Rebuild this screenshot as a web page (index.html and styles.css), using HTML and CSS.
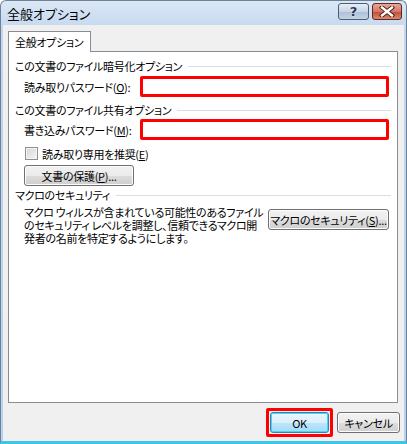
FILE: index.html
```html
<!DOCTYPE html>
<html lang="ja">
<head>
<meta charset="utf-8">
<link rel="stylesheet" href="styles.css">
</head>
<body>
<div class="window">
  <div class="titlebar">
    <span class="title">全般オプション</span>
    <div class="caption">
      <span class="cbtn help">?</span>
      <span class="cbtn close"><svg width="16" height="11" viewBox="0 0 16 11"><path d="M3 1.5 L13 9.5 M13 1.5 L3 9.5" stroke="#4a1a14" stroke-width="4.2" stroke-linecap="square" fill="none"/><path d="M3 1.5 L13 9.5 M13 1.5 L3 9.5" stroke="#ffffff" stroke-width="2.4" stroke-linecap="square" fill="none"/></svg></span>
    </div>
  </div>
  <div class="client">
    <div class="tabs"><div class="tab">全般オプション</div></div>
    <div class="panel">
      <div class="group-head"><span>この文書のファイル暗号化オプション</span><i class="rule"></i></div>
      <div class="field-row">
        <span class="label">読み取りパスワード(<u>O</u>):</span>
        <span class="input-hl"></span>
      </div>
      <div class="group-head gh2"><span>この文書のファイル共有オプション</span><i class="rule"></i></div>
      <div class="field-row fr2">
        <span class="label">書き込みパスワード(<u>M</u>):</span>
        <span class="input-hl"></span>
      </div>
      <div class="check-row"><span class="checkbox"></span><span>読み取り専用を推奨(<u>E</u>)</span></div>
      <div class="protect-row"><span class="btn protect">文書の保護(<u>P</u>)...</span></div>
      <div class="group-head gh3"><span>マクロのセキュリティ</span><i class="rule"></i></div>
      <div class="macro">
        <p class="macro-text">マクロ ウィルスが含まれている可能性のあるファイル<br>のセキュリティ レベルを調整し、信頼できるマクロ開<br>発者の名前を特定するようにします。</p>
        <span class="btn macro-btn">マクロのセキュリティ(<u>S</u>)...</span>
      </div>
    </div>
    <div class="footer">
      <span class="ok-hl"><span class="btn ok">OK</span></span>
      <span class="btn cancel">キャンセル</span>
    </div>
  </div>
</div>
</body>
</html>
```

FILE: styles.css
```css
html, body {
  margin: 0;
  padding: 0;
  background: #ffffff;
}
body {
  font-family: "Noto Sans CJK JP", "Noto Sans", sans-serif;
  font-size: 11px;
  letter-spacing: -0.3px;
  font-feature-settings: "palt" 1;
  color: #000;
  white-space: nowrap;
}
.window {
  width: 407px;
  height: 444px;
  box-sizing: border-box;
  border: 1px solid #6d8299;
  border-bottom: 3px solid #3ec6e8;
  border-radius: 6px 6px 0 0;
  background: linear-gradient(#dbe7f5, #c3d7ee 30px, #b9d1ec);
  display: flex;
  flex-direction: column;
  overflow: hidden;
}
.titlebar {
  height: 24px;
  display: flex;
  align-items: flex-start;
  padding-left: 6px;
  padding-right: 4px;
}
.title {
  font-size: 13px;
  line-height: 14px;
  margin-top: 6px;
  letter-spacing: 0;
}
.caption {
  margin-left: auto;
  display: flex;
  gap: 3px;
  margin-top: 2px;
}
.cbtn {
  height: 17px;
  box-sizing: border-box;
  border: 1px solid #4f5d71;
  border-radius: 3px;
  display: flex;
  align-items: center;
  justify-content: center;
}
.help {
  width: 31px;
  background: linear-gradient(#e5eef8, #c6d5e8 50%, #aebfd6 51%, #c3d3e6);
  color: #2a3a56;
  font-family: "DejaVu Sans", sans-serif;
  font-weight: bold;
  font-size: 13px;
  line-height: 13px;
  letter-spacing: 0;
  text-shadow: 0 0 2px #fff;
}
.close {
  width: 30px;
  border-color: #5b2b24;
  background: linear-gradient(#e8a597, #d27865 50%, #c14a35 51%, #d88a70);
}
.client {
  flex: 1;
  margin: 0 2px 0 2px;
  background: #f0f0f0;
  padding: 6px 6px 0 5px;
  display: flex;
  flex-direction: column;
}
.tabs {
  display: flex;
  height: 20px;
  position: relative;
  z-index: 1;
}
.tab {
  width: 83px;
  height: 21px;
  box-sizing: border-box;
  border: 1px solid #898c95;
  border-bottom: none;
  background: #ffffff;
  padding-left: 6px;
  line-height: 20px;
}
.panel {
  height: 352px;
  box-sizing: border-box;
  border: 1px solid #898c95;
  background: #ffffff;
  padding: 7px 6px 0 6px;
}
.group-head {
  display: flex;
  align-items: center;
  height: 14px;
  line-height: 14px;
}
.group-head .rule {
  flex: 1;
  height: 1px;
  background: #d5dfe5;
  margin-left: 6px;
  margin-top: 1px;
}
.gh2 { margin-top: 6px; }
.gh3 { margin-top: 2px; }
.field-row {
  display: flex;
  align-items: center;
  margin-top: 3px;
  padding-left: 9px;
  padding-right: 2px;
}
.fr2 { margin-top: 2px; }
.label {
  width: 116px;
  flex: none;
}
.input-hl {
  flex: 1;
  height: 21px;
  box-sizing: border-box;
  border: 3px solid #ff0000;
  border-radius: 2px;
  background: #fff;
}
.check-row {
  display: flex;
  align-items: center;
  margin-top: 7px;
  padding-left: 10px;
  height: 13px;
}
.checkbox {
  width: 13px;
  height: 13px;
  box-sizing: border-box;
  border: 1px solid #8e8f8f;
  background: linear-gradient(135deg, #d6d6d6, #f4f4f4);
  box-shadow: inset 0 0 0 1px #f4f4f4;
  margin-right: 4px;
}
.protect-row {
  margin-top: 5px;
  padding-left: 9px;
  display: flex;
}
.btn {
  display: inline-flex;
  align-items: center;
  justify-content: center;
  height: 21px;
  box-sizing: border-box;
  border: 1px solid #707070;
  border-radius: 3px;
  background: linear-gradient(#f2f2f2, #ebebeb 50%, #dddddd 51%, #cfcfcf);
  box-shadow: inset 0 0 0 1px #fcfcfc;
}
.protect { width: 110px; }
.macro {
  display: flex;
  align-items: flex-start;
  margin-top: 4px;
  padding-left: 9px;
  padding-right: 2px;
}
.macro-text {
  margin: 0;
  line-height: 13px;
}
.macro-btn {
  margin-left: auto;
  margin-top: 3px;
  width: 121px;
}
.footer {
  display: flex;
  justify-content: flex-end;
  align-items: center;
  margin-top: 5px;
  gap: 4px;
}
.ok-hl {
  display: flex;
  padding: 1px;
  border: 3px solid #ff0000;
  border-radius: 2px;
}
.ok {
  width: 59px;
  border-color: #3c7fb1;
  box-shadow: inset 0 0 0 1px #40d8f8;
  background: linear-gradient(#eaf6fd, #d9f0fc 50%, #bee6fd 51%, #a7d9f5);
}
.cancel {
  width: 63px;
  margin-right: -2px;
}
u { text-underline-offset: 1px; }
```
